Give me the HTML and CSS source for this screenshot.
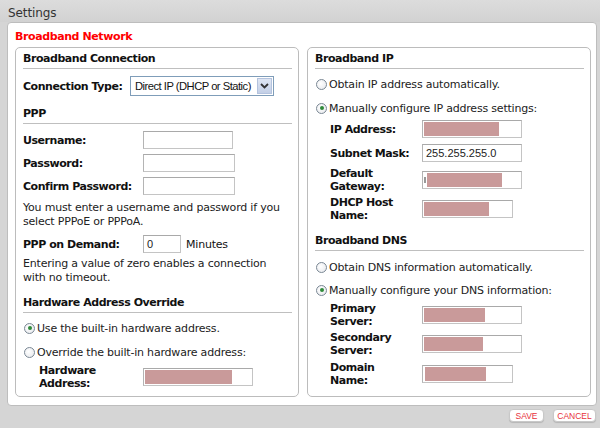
FILE: index.html
```html
<!DOCTYPE html>
<html>
<head>
<meta charset="utf-8">
<link rel="stylesheet" href="styles.css">
</head>
<body>
<div class="titlebar">Settings</div>
<div class="panel">
  <div class="page-title">Broadband Network</div>
  <div class="cols">
    <div class="box">
      <div class="heading">Broadband Connection</div>
      <div class="row conn-row">
        <span class="label w107">Connection Type:</span>
        <div class="select"><span class="select-text">Direct IP (DHCP or Static)</span><span class="select-btn"><svg width="9" height="6" viewBox="0 0 9 6"><path d="M1 1 L4.5 4.5 L8 1" fill="none" stroke="#333" stroke-width="1.8"/></svg></span></div>
      </div>
      <div class="heading mt11">PPP</div>
      <div class="row mt7"><span class="label w120">Username:</span><span class="input w90"></span></div>
      <div class="row mt5"><span class="label w120">Password:</span><span class="input w92"></span></div>
      <div class="row mt5"><span class="label w120">Confirm Password:</span><span class="input w92"></span></div>
      <p class="note mt6">You must enter a username and password if you select PPPoE or PPPoA.</p>
      <div class="row mt6"><span class="label w120">PPP on Demand:</span><span class="input w38 val">0</span><span class="unit">Minutes</span></div>
      <p class="note mt4">Entering a value of zero enables a connection with no timeout.</p>
      <div class="heading mt11">Hardware Address Override</div>
      <div class="radio-row mt8"><span class="radio on"></span>Use the built-in hardware address.</div>
      <div class="radio-row mt10"><span class="radio"></span>Override the built-in hardware address:</div>
      <div class="row2 mt5 ind16"><span class="label2 w104">Hardware<br>Address:</span><span class="input w110"><span class="redact" style="width:87px"></span></span></div>
    </div>
    <div class="box">
      <div class="heading">Broadband IP</div>
      <div class="radio-row mt8"><span class="radio"></span>Obtain IP address automatically.</div>
      <div class="radio-row mt10"><span class="radio on"></span>Manually configure IP address settings:</div>
      <div class="row mt5 ind15"><span class="label w92">IP Address:</span><span class="input w100"><span class="redact" style="width:75px"></span></span></div>
      <div class="row mt6 ind15"><span class="label w92">Subnet Mask:</span><span class="input w100 val">255.255.255.0</span></div>
      <div class="row2 mt5 ind15"><span class="label2 w92">Default<br>Gateway:</span><span class="input w100"><span class="stub"></span><span class="redact" style="width:75px;margin-left:1px"></span></span></div>
      <div class="row2 mt3 ind15"><span class="label2 w92">DHCP Host<br>Name:</span><span class="input w91"><span class="redact" style="width:65px"></span></span></div>
      <div class="heading mt12">Broadband DNS</div>
      <div class="radio-row mt9"><span class="radio"></span>Obtain DNS information automatically.</div>
      <div class="radio-row mt9"><span class="radio on"></span>Manually configure your DNS information:</div>
      <div class="row2 mt5 ind15"><span class="label2 w92">Primary<br>Server:</span><span class="input w100"><span class="redact" style="width:61px"></span></span></div>
      <div class="row2 mt3 ind15"><span class="label2 w92">Secondary<br>Server:</span><span class="input w100"><span class="redact" style="width:59px"></span></span></div>
      <div class="row2 mt4 ind15"><span class="label2 w92">Domain<br>Name:</span><span class="input w91"><span class="redact" style="width:61px;margin-left:1px"></span></span></div>
    </div>
  </div>
</div>
<div class="footer">
  <span class="btn save">SAVE</span>
  <span class="btn cancel">CANCEL</span>
</div>
</body>
</html>
```

FILE: styles.css
```css
* { box-sizing: border-box; }
html, body { margin: 0; padding: 0; }
body {
  width: 600px;
  height: 428px;
  background: #d5d5d5;
  font-family: "DejaVu Sans", Verdana, sans-serif;
  font-size: 11px;
  letter-spacing: -0.2px;
  color: #111;
  overflow: hidden;
}
.titlebar {
  height: 22px;
  line-height: 26px;
  padding-left: 8px;
  font-size: 12px;
  color: #333;
  letter-spacing: -0.1px;
  background: linear-gradient(#dcdcdc, #d2d2d2);
}
.panel {
  margin-left: 7px;
  width: 590px;
  height: 384px;
  background: #fff;
  border: 1px solid #bdbdbd;
  border-radius: 4px;
  padding: 0 0 0 7px;
}
.page-title {
  color: #ff0000;
  font-weight: bold;
  font-size: 11px;
  letter-spacing: -0.4px;
  line-height: 14px;
  padding-top: 7px;
  height: 24px;
}
.cols {
  display: grid;
  grid-template-columns: 284px 284px;
  column-gap: 8px;
}
.box {
  height: 350px;
  border: 1px solid #bcbcbc;
  border-radius: 5px;
  padding: 4px 6px 0 7px;
}
.heading {
  font-weight: bold;
  letter-spacing: -0.45px;
  line-height: 14px;
  padding-bottom: 2px;
  border-bottom: 1px solid #bfbfbf;
}
.row {
  display: flex;
  align-items: center;
  height: 18px;
}
.conn-row { height: 20px; margin-top: 7px; }
.row2 {
  display: flex;
  align-items: center;
  height: 26px;
}
.label { font-weight: bold; flex: none; letter-spacing: -0.45px; }
.label2 { font-weight: bold; flex: none; line-height: 13px; letter-spacing: -0.45px; }
.w107 { width: 107px; }
.w120 { width: 120px; }
.w104 { width: 104px; }
.w92 { width: 92px; }
.ind16 { padding-left: 16px; }
.ind15 { padding-left: 15px; }
.input {
  display: flex;
  align-items: center;
  height: 18px;
  flex: none;
  background: #fff;
  border: 1px solid #c4c4c4;
  border-top-color: #a9a9a9;
  border-left-color: #b4b4b4;
  font-family: "Liberation Sans", Arial, sans-serif;
  font-size: 11px;
  letter-spacing: 0;
  color: #222;
  padding: 1px;
}
.val { padding-left: 3px; }
.w38 { width: 38px; }
.w90 { width: 90px; }
.w91 { width: 91px; }
.w92 { width: 92px; }
.w100 { width: 100px; }
.w110 { width: 110px; }
.redact {
  display: block;
  height: 14px;
  background: #c99a9a;
}
.stub {
  display: block;
  width: 2px;
  height: 6px;
  background: #999;
}
.unit { margin-left: 5px; }
.select {
  display: flex;
  width: 144px;
  height: 20px;
  border: 1px solid #7f9db9;
  background: #fff;
  padding: 1px;
  font-family: "Liberation Sans", Arial, sans-serif;
  font-size: 11.2px;
  letter-spacing: -0.5px;
  white-space: nowrap;
}
.select-text { flex: 1; line-height: 16px; padding-left: 3px; color: #111; overflow: hidden; }
.select-btn {
  width: 15px;
  display: flex;
  align-items: center;
  justify-content: center;
  background: linear-gradient(#dfe6f3, #c3cfe6);
  border: 1px solid #b4c3de;
}
.note {
  margin: 0;
  line-height: 14px;
  color: #222;
}
.radio-row {
  display: flex;
  align-items: center;
  height: 14px;
  padding-left: 1px;
  color: #222;
}
.radio {
  width: 11px;
  height: 11px;
  border-radius: 50%;
  border: 1px solid #7a8794;
  background: radial-gradient(circle at 40% 40%, #fff, #e4e6ea);
  margin-right: 2px;
  flex: none;
  position: relative;
}
.radio.on::after {
  content: "";
  position: absolute;
  left: 2.5px;
  top: 2.5px;
  width: 4px;
  height: 4px;
  border-radius: 50%;
  background: #2f8a3a;
}
.mt3 { margin-top: 3px; }
.mt4 { margin-top: 4px; }
.mt5 { margin-top: 5px; }
.mt6 { margin-top: 6px; }
.mt7 { margin-top: 7px; }
.mt8 { margin-top: 8px; }
.mt9 { margin-top: 9px; }
.mt10 { margin-top: 10px; }
.mt11 { margin-top: 11px; }
.mt12 { margin-top: 12px; }
.footer {
  display: flex;
  justify-content: flex-end;
  gap: 9px;
  padding: 3px 4px 0 0;
}
.btn {
  display: block;
  height: 13px;
  line-height: 13px;
  text-align: center;
  background: #fff;
  border: 1px solid #c8c8c8;
  border-radius: 4px;
  box-shadow: 0 1px 1px rgba(0,0,0,0.15);
  color: #e8323c;
  font-family: "Liberation Sans", Arial, sans-serif;
  font-size: 8.5px;
  letter-spacing: 0;
}
.save { width: 35px; }
.cancel { width: 43px; }
```
